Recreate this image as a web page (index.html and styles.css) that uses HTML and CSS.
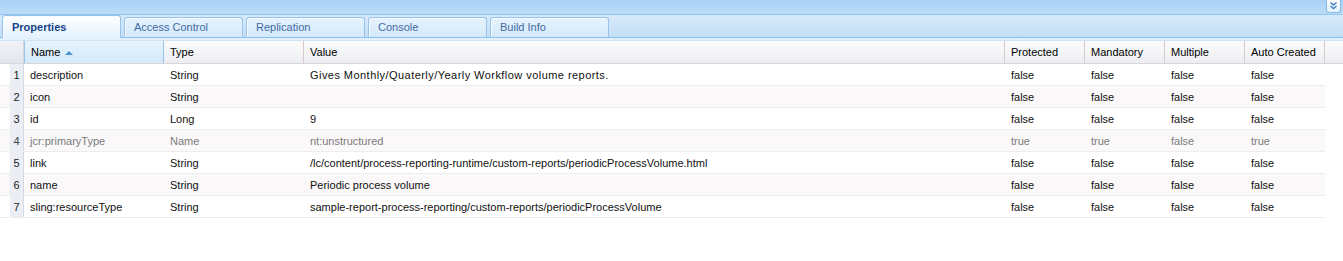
FILE: index.html
```html
<!DOCTYPE html>
<html>
<head>
<meta charset="utf-8">
<link rel="stylesheet" href="styles.css">
</head>
<body>
<div class="topbar">
  <span class="collapse">
    <svg width="13" height="12" viewBox="0 0 13 12"><path d="M3.5 2.5 L6.5 5 L9.5 2.5 M3.5 6 L6.5 8.5 L9.5 6" fill="none" stroke="#3d7fc4" stroke-width="1.4"/></svg>
  </span>
</div>
<div class="tabstrip">
  <div class="tab active">Properties</div>
  <div class="tab">Access Control</div>
  <div class="tab">Replication</div>
  <div class="tab">Console</div>
  <div class="tab">Build Info</div>
</div>
<div class="tabgap"></div>
<div class="grid">
  <div class="hrow">
    <div class="hc num"></div>
    <div class="hc c-name sorted">Name <span class="sort"></span></div>
    <div class="hc c-type">Type</div>
    <div class="hc c-val">Value</div>
    <div class="hc c-b">Protected</div>
    <div class="hc c-b">Mandatory</div>
    <div class="hc c-b">Multiple</div>
    <div class="hc c-b">Auto Created</div>
    <div class="hc c-fill"></div>
  </div>
  <div class="row">
    <div class="cell num"><span>1</span></div><div class="cell c-name">description</div><div class="cell c-type">String</div><div class="cell c-val wide">Gives Monthly/Quaterly/Yearly Workflow volume reports.</div><div class="cell c-b">false</div><div class="cell c-b">false</div><div class="cell c-b">false</div><div class="cell c-b">false</div>
  </div>
  <div class="row alt">
    <div class="cell num"><span>2</span></div><div class="cell c-name">icon</div><div class="cell c-type">String</div><div class="cell c-val"></div><div class="cell c-b">false</div><div class="cell c-b">false</div><div class="cell c-b">false</div><div class="cell c-b">false</div>
  </div>
  <div class="row">
    <div class="cell num"><span>3</span></div><div class="cell c-name">id</div><div class="cell c-type">Long</div><div class="cell c-val">9</div><div class="cell c-b">false</div><div class="cell c-b">false</div><div class="cell c-b">false</div><div class="cell c-b">false</div>
  </div>
  <div class="row alt dim">
    <div class="cell num"><span>4</span></div><div class="cell c-name">jcr:primaryType</div><div class="cell c-type">Name</div><div class="cell c-val">nt:unstructured</div><div class="cell c-b">true</div><div class="cell c-b">true</div><div class="cell c-b">false</div><div class="cell c-b">true</div>
  </div>
  <div class="row">
    <div class="cell num"><span>5</span></div><div class="cell c-name">link</div><div class="cell c-type">String</div><div class="cell c-val">/lc/content/process-reporting-runtime/custom-reports/periodicProcessVolume.html</div><div class="cell c-b">false</div><div class="cell c-b">false</div><div class="cell c-b">false</div><div class="cell c-b">false</div>
  </div>
  <div class="row alt">
    <div class="cell num"><span>6</span></div><div class="cell c-name">name</div><div class="cell c-type">String</div><div class="cell c-val">Periodic process volume</div><div class="cell c-b">false</div><div class="cell c-b">false</div><div class="cell c-b">false</div><div class="cell c-b">false</div>
  </div>
  <div class="row">
    <div class="cell num"><span>7</span></div><div class="cell c-name">sling:resourceType</div><div class="cell c-type">String</div><div class="cell c-val">sample-report-process-reporting/custom-reports/periodicProcessVolume</div><div class="cell c-b">false</div><div class="cell c-b">false</div><div class="cell c-b">false</div><div class="cell c-b">false</div>
  </div>
</div>
</body>
</html>
```

FILE: styles.css
```css
* { box-sizing: border-box; }
html, body { margin: 0; padding: 0; background: #fff; }
body {
  font-family: "Liberation Sans", Arial, sans-serif;
  font-size: 11px;
  color: #000;
}
.topbar {
  height: 15px;
  background: linear-gradient(#a9d2f6, #bcdcf8);
  border-bottom: 1px solid #8ec4ef;
  display: flex;
  justify-content: flex-end;
  align-items: flex-start;
  padding-right: 2px;
}
.collapse {
  width: 15px;
  height: 13px;
  background: linear-gradient(#ffffff, #e3f0fb);
  border: 1px solid #8ab9e3;
  border-top: none;
  border-radius: 0 0 3px 3px;
  display: flex;
  align-items: center;
  justify-content: center;
}
.tabstrip {
  height: 23px;
  background: linear-gradient(#d7e9fa, #c3dff7);
  border-bottom: 1px solid #8cc0ea;
  display: flex;
  align-items: flex-end;
  gap: 3px;
  padding-left: 2px;
}
.tab {
  width: 119px;
  height: 21px;
  margin-bottom: -1px;
  border: 1px solid #99c3ea;
  border-bottom: 1px solid #8cc0ea;
  border-radius: 3px 3px 0 0;
  background: linear-gradient(#e6f3fd, #d3e9fb);
  box-shadow: inset 1px 1px 0 #f4faff;
  color: #416aa3;
  padding: 3px 0 0 9px;
  line-height: 13px;
}
.tab.active {
  height: 23px;
  border-bottom: none;
  background: linear-gradient(#ffffff, #e4f2fd);
  color: #15428b;
  font-weight: bold;
  padding: 5px 0 0 9px;
  position: relative;
  z-index: 1;
}
.tabgap {
  height: 3px;
  background: #e1f0fc;
  border-bottom: 1px solid #d2e4f2;
}
.grid {
  display: flex;
  flex-direction: column;
}
.hrow {
  display: flex;
  height: 23px;
  background: linear-gradient(#fbfbfb, #eceef2);
  border-bottom: 1px solid #d6d6d8;
}
.hc {
  border-right: 1px solid #dbcccc;
  padding: 5px 0 0 6px;
  line-height: 13px;
  color: #000;
  flex: none;
}
.hc.num { width: 24px; background: linear-gradient(#f1f3f6, #e1e5eb); border-right: 1px solid #cfd6df; }
.hc.sorted {
  background: linear-gradient(#e6f3fd, #d4e9fa);
  border-right: 1px solid #9bc6ea;
  border-left: 1px solid #9bc6ea;
}
.sort {
  display: inline-block;
  width: 0; height: 0;
  border-left: 4px solid transparent;
  border-right: 4px solid transparent;
  border-bottom: 4px solid #4a93d4;
  margin-left: 2px;
  vertical-align: 1px;
}
.c-name { width: 140px; }
.c-type { width: 140px; }
.c-val { width: 701px; }
.c-val.wide { letter-spacing: 0.45px; }
.c-b { width: 80px; }
.c-fill { width: 18px; border-right: none; }
.hc.c-fill { flex: 1; }
.row {
  display: flex;
  width: 1325px;
  height: 22px;
  border-bottom: 1px solid #ededed;
}
.row.alt { background: #faf8f9; }
.row.dim .cell { color: #7b7b7b; }
.cell {
  flex: none;
  padding: 5px 0 0 6px;
  line-height: 13px;
  white-space: nowrap;
  color: #111;
}
.cell.num {
  width: 24px;
  padding: 0 0 0 10px;
}
.cell.num span {
  display: block;
  height: 21px;
  background: #ebeff5;
  border-right: 1px solid #d3d9e2;
  text-align: center;
  padding-top: 5px;
  line-height: 13px;
  color: #222;
}
.row.dim .cell.num span { color: #444; }
```
